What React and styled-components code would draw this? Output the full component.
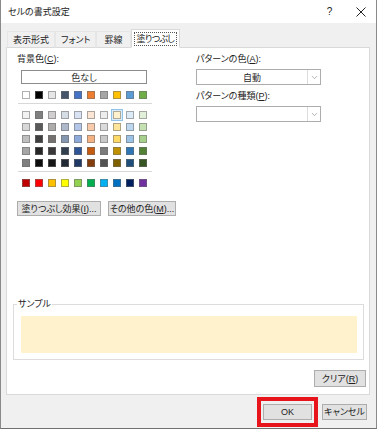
import styled, { createGlobalStyle } from "styled-components";
import { ChevronDown } from "lucide-react";

const GlobalStyle = createGlobalStyle`
  html, body {
    margin: 0;
    padding: 0;
    background: #ffffff;
  }
  body {
    font-family: "Liberation Sans", "Noto Sans CJK JP", sans-serif;
    font-feature-settings: "palt";
    font-size: 9px;
    color: #2a2a2a;
  }
`;

const themeRow = ["#FFFFFF", "#000000", "#E7E6E6", "#44546A", "#4472C4", "#ED7D31", "#A5A5A5", "#FFC000", "#5B9BD5", "#70AD47"];

const tintRows = [
  ["#F2F2F2", "#7F7F7F", "#D0CECE", "#D6DCE4", "#D9E2F3", "#FBE5D5", "#EDEDED", "#FFF2CC", "#DDEBF7", "#E2EFD9"],
  ["#D8D8D8", "#595959", "#AEABAB", "#ADB9CA", "#B4C6E7", "#F7CBAC", "#DBDBDB", "#FEE599", "#BDD7EE", "#C5E0B3"],
  ["#BFBFBF", "#3F3F3F", "#757070", "#8496B0", "#8EAADB", "#F4B183", "#C9C9C9", "#FFD965", "#9CC3E5", "#A8D08D"],
  ["#A5A5A5", "#262626", "#3A3838", "#323F4F", "#2F5496", "#C55A11", "#7B7B7B", "#BF9000", "#2E75B5", "#538135"],
  ["#7F7F7F", "#0C0C0C", "#161616", "#222A35", "#1F3864", "#833C0B", "#525252", "#7F6000", "#1E4E79", "#375623"],
];

const standardRow = ["#C00000", "#FF0000", "#FFC000", "#FFFF00", "#92D050", "#00B050", "#00B0F0", "#0070C0", "#002060", "#7030A0"];

export default function App() {
  return (
    <>
      <GlobalStyle />
      <Dialog>
        <TitleBar>
          <Title>セルの書式設定</Title>
          <TitleButtons>
            <TitleIcon>?</TitleIcon>
            <TitleIcon>
              <svg width="10" height="10" viewBox="0 0 10 10">
                <path d="M0.5 0.5 L9.5 9.5 M9.5 0.5 L0.5 9.5" stroke="#222" strokeWidth="1" />
              </svg>
            </TitleIcon>
          </TitleButtons>
        </TitleBar>

        <TabStrip>
          <Tab>表示形式</Tab>
          <Tab>フォント</Tab>
          <Tab $wide>罫線</Tab>
          <Tab $active>
            <FocusText>塗りつぶし</FocusText>
          </Tab>
        </TabStrip>

        <Panel>
          <Columns>
            <LeftColumn>
              <Label>
                背景色(<u>C</u>):
              </Label>
              <NoColorButton>色なし</NoColorButton>
              <SwatchGrid $top={7}>
                {themeRow.map((c, i) => (
                  <Swatch key={i} $color={c} />
                ))}
              </SwatchGrid>
              <Divider />
              <SwatchGrid>
                {tintRows.flat().map((c, i) => (
                  <Swatch key={i} $color={c} $selected={i === 7} />
                ))}
              </SwatchGrid>
              <Divider />
              <SwatchGrid>
                {standardRow.map((c, i) => (
                  <Swatch key={i} $color={c} />
                ))}
              </SwatchGrid>
              <ButtonRow>
                <Button $width={84}>
                  塗りつぶし効果(<u>I</u>)...
                </Button>
                <Button $width={68}>
                  その他の色(<u>M</u>)...
                </Button>
              </ButtonRow>
            </LeftColumn>

            <RightColumn>
              <Label>
                パターンの色(<u>A</u>):
              </Label>
              <Select>
                <SelectValue>自動</SelectValue>
                <SelectArrow>
                  <ChevronDown size={9} strokeWidth={1.5} color="#777" />
                </SelectArrow>
              </Select>
              <Label $top={5}>
                パターンの種類(<u>P</u>):
              </Label>
              <Select>
                <SelectValue />
                <SelectArrow>
                  <ChevronDown size={9} strokeWidth={1.5} color="#777" />
                </SelectArrow>
              </Select>
            </RightColumn>
          </Columns>

          <SampleGroup>
            <SampleLegend>サンプル</SampleLegend>
            <SampleFill />
          </SampleGroup>

          <ClearRow>
            <Button $width={52} $height={17}>
              クリア(<u>R</u>)
            </Button>
          </ClearRow>
        </Panel>

        <Footer>
          <OkWrap>
            <Button $width={49} $height={16}>OK</Button>
            <Highlight />
          </OkWrap>
          <Button $width={45} $height={16}>キャンセル</Button>
        </Footer>
      </Dialog>
    </>
  );
}

const Dialog = styled.div`
  width: 377px;
  height: 429px;
  box-sizing: border-box;
  display: flex;
  flex-direction: column;
  background: #f0f0f0;
  border-left: 1px solid #8a8a8a;
  border-right: 1px solid #8a8a8a;
  border-bottom: 1px solid #707070;
`;

const TitleBar = styled.div`
  height: 23px;
  display: flex;
  align-items: center;
  justify-content: space-between;
  padding: 0 0 0 7px;
  background: #ffffff;
`;

const Title = styled.div`
  font-size: 9px;
  color: #222;
`;

const TitleButtons = styled.div`
  display: flex;
  align-items: center;
`;

const TitleIcon = styled.div`
  width: 31px;
  height: 23px;
  display: flex;
  align-items: center;
  justify-content: center;
  font-size: 10px;
  color: #222;
`;

const TabStrip = styled.div`
  display: flex;
  align-items: flex-end;
  height: 24px;
  padding: 0 0 0 6px;
  background: #f0f0f0;
`;

const Tab = styled.div`
  height: ${(p) => (p.$active ? "19px" : "17px")};
  box-sizing: border-box;
  display: flex;
  align-items: center;
  padding: ${(p) => (p.$active ? "0 3px" : p.$wide ? "0 7px" : "0 5px")};
  margin-bottom: -1px;
  background: ${(p) => (p.$active ? "#ffffff" : "#f0f0f0")};
  border: 1px solid ${(p) => (p.$active ? "#d9d9d9" : "#e6e6e6")};
  border-bottom: ${(p) => (p.$active ? "1px solid #ffffff" : "1px solid #d9d9d9")};
  position: relative;
  z-index: ${(p) => (p.$active ? 1 : 0)};
  color: #222;
`;

const FocusText = styled.span`
  outline: 1px dotted #555;
  padding: 0 2px;
  line-height: 12px;
  letter-spacing: -0.7px;
`;

const Panel = styled.div`
  flex: 1;
  margin: 0 6px 0 5px;
  background: #ffffff;
  border: 1px solid #d9d9d9;
  display: flex;
  flex-direction: column;
`;

const Columns = styled.div`
  display: grid;
  grid-template-columns: 179px 1fr;
  padding: 5px 0 0 10px;
`;

const LeftColumn = styled.div`
  display: flex;
  flex-direction: column;
`;

const RightColumn = styled.div`
  display: flex;
  flex-direction: column;
  width: 125px;
`;

const Label = styled.div`
  margin-top: ${(p) => p.$top || 0}px;
  line-height: 12px;
  color: #222;
  u {
    text-underline-offset: 1px;
  }
`;

const NoColorButton = styled.div`
  margin: 5px 0 0 4px;
  width: 126px;
  height: 14px;
  box-sizing: border-box;
  border: 1px solid #8c8c8c;
  display: flex;
  align-items: center;
  justify-content: center;
`;

const SwatchGrid = styled.div`
  display: grid;
  grid-template-columns: repeat(10, 8px);
  column-gap: 5px;
  row-gap: 4px;
  margin: ${(p) => p.$top || 0}px 0 0 5px;
`;

const Swatch = styled.div`
  width: 8px;
  height: 8px;
  box-sizing: border-box;
  background: ${(p) => p.$color};
  border: 1px solid rgba(110, 110, 110, 0.55);
  outline: ${(p) => (p.$selected ? "1px solid #8fc3ea" : "none")};
  outline-offset: 1px;
  box-shadow: ${(p) => (p.$selected ? "0 0 0 1px #dcecf9" : "none")};
`;

const Divider = styled.div`
  width: 134px;
  height: 1px;
  background: #d8d8d8;
  margin: 4px 0 7px 1px;
`;

const ButtonRow = styled.div`
  display: flex;
  gap: 7px;
  margin-top: 14px;
`;

const Button = styled.div`
  height: ${(p) => p.$height || 15}px;
  width: ${(p) => (p.$width ? `${p.$width}px` : "auto")};
  box-sizing: border-box;
  display: flex;
  align-items: center;
  justify-content: center;
  background: #e1e1e1;
  border: 1px solid #adadad;
  color: #222;
  white-space: nowrap;
`;

const Select = styled.div`
  margin-top: 4px;
  height: 16px;
  box-sizing: border-box;
  border: 1px solid #adadad;
  display: flex;
  background: #ffffff;
`;

const SelectValue = styled.div`
  flex: 1;
  display: flex;
  align-items: center;
  justify-content: center;
`;

const SelectArrow = styled.div`
  width: 12px;
  display: flex;
  align-items: center;
  justify-content: center;
  border-left: 1px solid #dcdcdc;
`;

const SampleGroup = styled.fieldset`
  margin: auto 5px 0 6px;
  padding: 6px 6px 6px 7px;
  border: 1px solid #dcdcdc;
  height: 61px;
  box-sizing: border-box;
  min-width: 0;
`;

const SampleLegend = styled.legend`
  padding: 0 1px;
  margin-left: -4px;
  line-height: 11px;
  color: #222;
`;

const SampleFill = styled.div`
  height: 37px;
  background: #fff2cc;
`;

const ClearRow = styled.div`
  display: flex;
  justify-content: flex-end;
  padding: 10px 3px 7px 0;
`;

const Footer = styled.div`
  height: 33px;
  display: flex;
  align-items: center;
  justify-content: flex-end;
  gap: 10px;
  padding-right: 9px;
  background: #f0f0f0;
`;

const OkWrap = styled.div`
  position: relative;
`;

const Highlight = styled.div`
  position: absolute;
  left: -6px;
  top: -7px;
  width: 61px;
  height: 30px;
  box-sizing: border-box;
  border: 4px solid #e8141c;
`;
